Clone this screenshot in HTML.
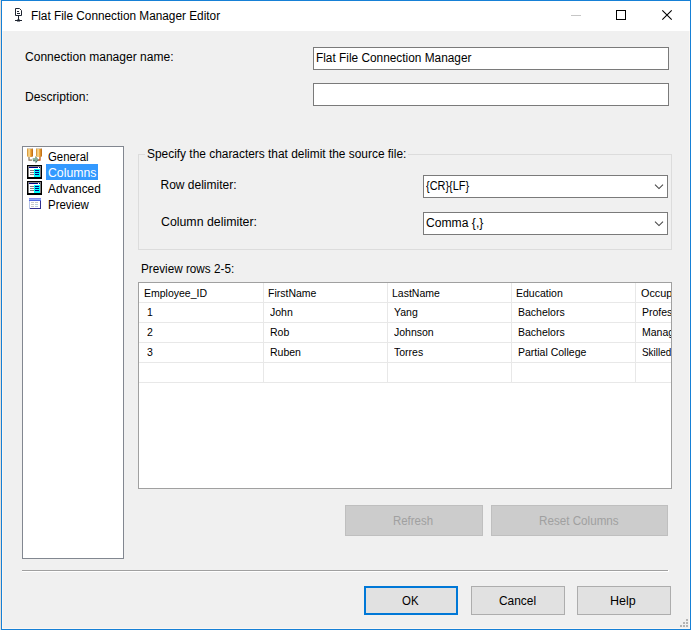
<!DOCTYPE html>
<html><head><meta charset="utf-8">
<style>
*{box-sizing:border-box;margin:0;padding:0}
html,body{width:691px;height:630px;overflow:hidden;background:#f0f0f0}
body{position:relative;font:12px "Liberation Sans",sans-serif;color:#000}
.abs{position:absolute}
.t{position:absolute;white-space:pre;line-height:16px;height:16px;transform-origin:0 0}
#bg{left:0;top:0;width:1px;height:630px;background:#e6ded6}
#win{left:1px;top:0;width:690px;height:630px;border:1px solid #1680d6;background:#f0f0f0;box-shadow:inset 0 0 0 1px #fbf7f3}
#tb{left:2px;top:1px;width:688px;height:30px;background:#fff}
.box{position:absolute;background:#fff;border:1px solid #7a7a7a}
.btn{position:absolute;background:#e1e1e1;border:1px solid #adadad}
.dis{position:absolute;background:#cccccc;border:1px solid #bfbfbf}
.gl{position:absolute;background:#e8e8e8}
.c{position:absolute;white-space:pre;font-size:11px;line-height:14px;height:14px;transform-origin:0 0;transform:scaleX(.955)}
</style></head><body>
<div class="abs" id="bg"></div>
<div class="abs" id="win"></div>
<div class="abs" id="tb"></div>

<!-- title icon -->
<svg class="abs" style="left:14px;top:7px" width="10" height="16" viewBox="0 0 10 16">
<path d="M1.5 1.5h4l2 2v5h-6z" fill="#fff" stroke="#1e2430" stroke-width="1"/>
<path d="M3 4.5h2M3 6.5h3" stroke="#1e2430" stroke-width="1"/>
<path d="M4.5 9v4M1 13.5h7" stroke="#1e2430" stroke-width="1"/>
<rect x="3" y="12.5" width="3" height="2" fill="#1e2430"/>
</svg>
<div class="t" id="title" style="left:31.22px;top:8px;transform:scaleX(0.9843)">Flat File Connection Manager Editor</div>

<!-- caption buttons -->
<div class="abs" style="left:571px;top:15px;width:10px;height:1px;background:#c6c6c6"></div>
<div class="abs" style="left:616px;top:10px;width:10px;height:10px;border:1px solid #000"></div>
<svg class="abs" style="left:661px;top:9px" width="13" height="13" viewBox="0 0 13 13"><path d="M1.3 1.3l9.4 9.4M10.7 1.3L1.3 10.7" stroke="#000" stroke-width="1.1" fill="none"/></svg>

<!-- top fields -->
<div class="t" id="l1" style="left:25.2px;top:49px;transform:scaleX(1.0027)">Connection manager name:</div>
<div class="t" id="l2" style="left:24.69px;top:89px;transform:scaleX(1.009)">Description:</div>
<div class="box" style="left:313px;top:47px;width:356px;height:23px"></div>
<div class="t" id="v1" style="left:315.51px;top:50px;transform:scaleX(0.9875)">Flat File Connection Manager</div>
<div class="box" style="left:313px;top:83px;width:356px;height:23px"></div>

<!-- list -->
<div class="box" id="list" style="left:22px;top:146px;width:102px;height:413px;border-color:#828790"></div>
<div class="abs" style="left:46px;top:164px;width:52px;height:16px;background:#3399ff"></div>
<div class="t" id="n1" style="left:47.83px;top:149px;transform:scaleX(0.9494)">General</div>
<div class="t" id="n2" style="left:47.99px;top:165px;transform:scaleX(1.0215);color:#fff">Columns</div>
<div class="t" id="n3" style="left:48.1px;top:181px;transform:scaleX(0.9896)">Advanced</div>
<div class="t" id="n4" style="left:47.94px;top:197px;transform:scaleX(0.9557)">Preview</div>

<!-- icons -->
<svg class="abs" style="left:26px;top:148px" width="16" height="16" viewBox="0 0 16 16">
<defs><linearGradient id="cy" x1="0" x2="1" y1="0" y2="0"><stop offset="0" stop-color="#d08820"/><stop offset=".35" stop-color="#fbe0a0"/><stop offset=".6" stop-color="#f0a838"/><stop offset="1" stop-color="#b86410"/></linearGradient></defs>
<path d="M3 9v3.2h3" stroke="#8a7a60" stroke-width="1.2" fill="none"/><path d="M14 9v3.2h-2" stroke="#b04a10" stroke-width="1.2" fill="none"/>
<rect x="1" y="0" width="6" height="9" rx="1.6" ry="1.2" fill="url(#cy)"/>
<rect x="10" y="0" width="6" height="9" rx="1.6" ry="1.2" fill="url(#cy)"/>
<rect x="1.5" y="0" width="5" height="1" rx=".5" fill="#d8cfc0"/><rect x="10.5" y="0" width="5" height="1" rx=".5" fill="#d8cfc0"/>
<path d="M7 10.8h2.6V8.4l2.9 3.4L9.6 15.4v-2.2H7z" fill="#3a4a50"/>
<path d="M6.6 10.2h2.6V8l2.9 3.4L9.2 14.8v-2.2H6.6z" fill="#84b098"/>
</svg>
<svg class="abs" style="left:26px;top:164px" width="16" height="16" viewBox="0 0 16 16" shape-rendering="crispEdges">
<rect x="1" y="1" width="15" height="14" fill="#000"/>
<rect x="2" y="2" width="13" height="11" fill="#808080"/>
<rect x="3" y="3" width="11" height="10" fill="#fff"/>
<rect x="3" y="3" width="11" height="1" fill="#000080"/>
<rect x="12" y="3" width="1" height="1" fill="#fff"/>
<rect x="8" y="5" width="6" height="8" fill="#00ffff"/>
<rect x="4" y="6" width="4" height="1" fill="#808080"/><rect x="4" y="8" width="4" height="1" fill="#808080"/><rect x="4" y="10" width="4" height="1" fill="#808080"/>
<rect x="9" y="6" width="4" height="1" fill="#000080"/><rect x="9" y="8" width="4" height="1" fill="#000080"/><rect x="9" y="10" width="4" height="1" fill="#000080"/>
</svg>
<svg class="abs" style="left:26px;top:180px" width="16" height="16" viewBox="0 0 16 16" shape-rendering="crispEdges">
<rect x="1" y="1" width="15" height="14" fill="#000"/>
<rect x="2" y="2" width="13" height="11" fill="#808080"/>
<rect x="3" y="3" width="11" height="10" fill="#fff"/>
<rect x="3" y="3" width="11" height="1" fill="#000080"/>
<rect x="12" y="3" width="1" height="1" fill="#fff"/>
<rect x="8" y="5" width="6" height="8" fill="#00ffff"/>
<rect x="4" y="6" width="4" height="1" fill="#808080"/><rect x="4" y="8" width="4" height="1" fill="#808080"/><rect x="4" y="10" width="4" height="1" fill="#808080"/>
<rect x="9" y="6" width="4" height="1" fill="#000080"/><rect x="9" y="8" width="4" height="1" fill="#000080"/><rect x="9" y="10" width="4" height="1" fill="#000080"/>
</svg>
<svg class="abs" style="left:26px;top:196px" width="16" height="16" viewBox="0 0 16 16" shape-rendering="crispEdges">
<rect x="3" y="2" width="12" height="11" fill="#b8c4e8"/>
<rect x="4" y="4" width="10" height="8" fill="#fff"/>
<rect x="3" y="2" width="12" height="1" fill="#8088f0"/>
<rect x="3" y="3" width="12" height="1" fill="#90b0f8"/>
<rect x="3" y="4" width="12" height="1" fill="#5068e0"/>
<rect x="14" y="5" width="1" height="8" fill="#303090"/>
<rect x="4" y="12" width="11" height="1" fill="#303090"/>
<rect x="5" y="6" width="3" height="1" fill="#c8c8c8"/><rect x="5" y="8" width="3" height="1" fill="#c8c8c8"/><rect x="5" y="10" width="3" height="1" fill="#c8c8c8"/>
<rect x="9" y="6" width="3" height="1" fill="#c8c8c8"/><rect x="9" y="8" width="3" height="1" fill="#b8d0e0"/><rect x="9" y="10" width="3" height="1" fill="#b8d0e0"/>
</svg>

<!-- groupbox -->
<div class="abs" style="left:138px;top:154px;width:534px;height:96px;border:1px solid #dcdcdc"></div>
<div class="abs" style="left:145px;top:148px;width:263px;height:14px;background:#f0f0f0"></div>
<div class="t" id="g1" style="left:147.2px;top:146px;transform:scaleX(0.9919)">Specify the characters that delimit the source file:</div>
<div class="t" id="g2" style="left:160.5px;top:177px;transform:scaleX(1.0)">Row delimiter:</div>
<div class="t" id="g3" style="left:160.88px;top:214px;transform:scaleX(1.028)">Column delimiter:</div>
<div class="box" style="left:423px;top:175px;width:245px;height:23px"></div>
<div class="t" id="c1" style="left:426.17px;top:178px;transform:scaleX(0.9106)">{CR}{LF}</div>
<div class="box" style="left:423px;top:212px;width:245px;height:23px"></div>
<div class="t" id="c2" style="left:426.19px;top:215px;transform:scaleX(1.0107)">Comma {,}</div>
<svg class="abs" style="left:654px;top:183px" width="10" height="7" viewBox="0 0 10 7"><path d="M1 1.6l4 4 4-4" stroke="#444" stroke-width="1.05" fill="none"/></svg>
<svg class="abs" style="left:654px;top:220px" width="10" height="7" viewBox="0 0 10 7"><path d="M1 1.6l4 4 4-4" stroke="#444" stroke-width="1.05" fill="none"/></svg>

<!-- preview -->
<div class="t" id="p1" style="left:140.62px;top:261px;transform:scaleX(0.9769)">Preview rows 2-5:</div>
<div class="abs" id="grid" style="left:138px;top:282px;width:534px;height:207px;background:#fff;border:1px solid #a0a0a0;overflow:hidden">
  <div class="gl" style="left:0;top:19px;width:532px;height:1px"></div>
  <div class="gl" style="left:0;top:39px;width:532px;height:1px"></div>
  <div class="gl" style="left:0;top:59px;width:532px;height:1px"></div>
  <div class="gl" style="left:0;top:79px;width:532px;height:1px"></div>
  <div class="gl" style="left:0;top:99px;width:532px;height:1px"></div>
  <div class="gl" style="left:124px;top:0;width:1px;height:100px"></div>
  <div class="gl" style="left:248px;top:0;width:1px;height:100px"></div>
  <div class="gl" style="left:372px;top:0;width:1px;height:100px"></div>
  <div class="gl" style="left:496px;top:0;width:1px;height:100px"></div>
  <div class="c" style="left:5px;top:3px">Employee_ID</div>
  <div class="c" style="left:129px;top:3px">FirstName</div>
  <div class="c" style="left:253px;top:3px">LastName</div>
  <div class="c" style="left:377px;top:3px">Education</div>
  <div class="c" style="left:501.5px;top:3px;transform:scaleX(.985)">Occupation</div>
  <div class="c" style="left:8px;top:22px">1</div>
  <div class="c" style="left:131.2px;top:22px">John</div>
  <div class="c" style="left:255.2px;top:22px">Yang</div>
  <div class="c" style="left:379px;top:22px">Bachelors</div>
  <div class="c" style="left:503px;top:22px">Professional</div>
  <div class="c" style="left:8px;top:42px">2</div>
  <div class="c" style="left:131.2px;top:42px">Rob</div>
  <div class="c" style="left:255.2px;top:42px">Johnson</div>
  <div class="c" style="left:379px;top:42px">Bachelors</div>
  <div class="c" style="left:503px;top:42px">Management</div>
  <div class="c" style="left:8px;top:62px">3</div>
  <div class="c" style="left:131.2px;top:62px">Ruben</div>
  <div class="c" style="left:255.2px;top:62px">Torres</div>
  <div class="c" style="left:379px;top:62px">Partial College</div>
  <div class="c" style="left:503px;top:62px;transform:scaleX(.9)">Skilled Manual</div>
</div>

<!-- disabled buttons -->
<div class="dis" style="left:345px;top:505px;width:138px;height:31px"></div>
<div class="t" id="b1" style="left:393.45px;top:513px;transform:scaleX(0.9516);color:#a0a0a0">Refresh</div>
<div class="dis" style="left:491px;top:505px;width:177px;height:31px"></div>
<div class="t" id="b2" style="left:538.53px;top:513px;transform:scaleX(0.9709);color:#a0a0a0">Reset Columns</div>

<!-- separator -->
<div class="abs" style="left:22px;top:570px;width:647px;height:2px;background:#fff"></div>
<div class="abs" style="left:22px;top:570px;width:646px;height:1px;background:#a0a0a0"></div>

<!-- bottom buttons -->
<div class="btn" style="left:364px;top:586px;width:94px;height:29px;border:2px solid #0078d7"></div>
<div class="t" id="b3" style="left:402.02px;top:593px;transform:scaleX(0.9552)">OK</div>
<div class="btn" style="left:471px;top:586px;width:94px;height:29px"></div>
<div class="t" id="b4" style="left:498.8px;top:593px;transform:scaleX(0.9917)">Cancel</div>
<div class="btn" style="left:577px;top:586px;width:94px;height:29px"></div>
<div class="t" id="b5" style="left:610.16px;top:593px;transform:scaleX(1.0409)">Help</div>

<!-- grip -->
<svg class="abs" style="left:678px;top:617px" width="11" height="11" viewBox="0 0 11 11" shape-rendering="crispEdges">
<g fill="#b4b4b4"><rect x="8" y="2" width="2" height="2"/><rect x="5" y="5" width="2" height="2"/><rect x="8" y="5" width="2" height="2"/><rect x="2" y="8" width="2" height="2"/><rect x="5" y="8" width="2" height="2"/><rect x="8" y="8" width="2" height="2"/></g>
</svg>
</body></html>
